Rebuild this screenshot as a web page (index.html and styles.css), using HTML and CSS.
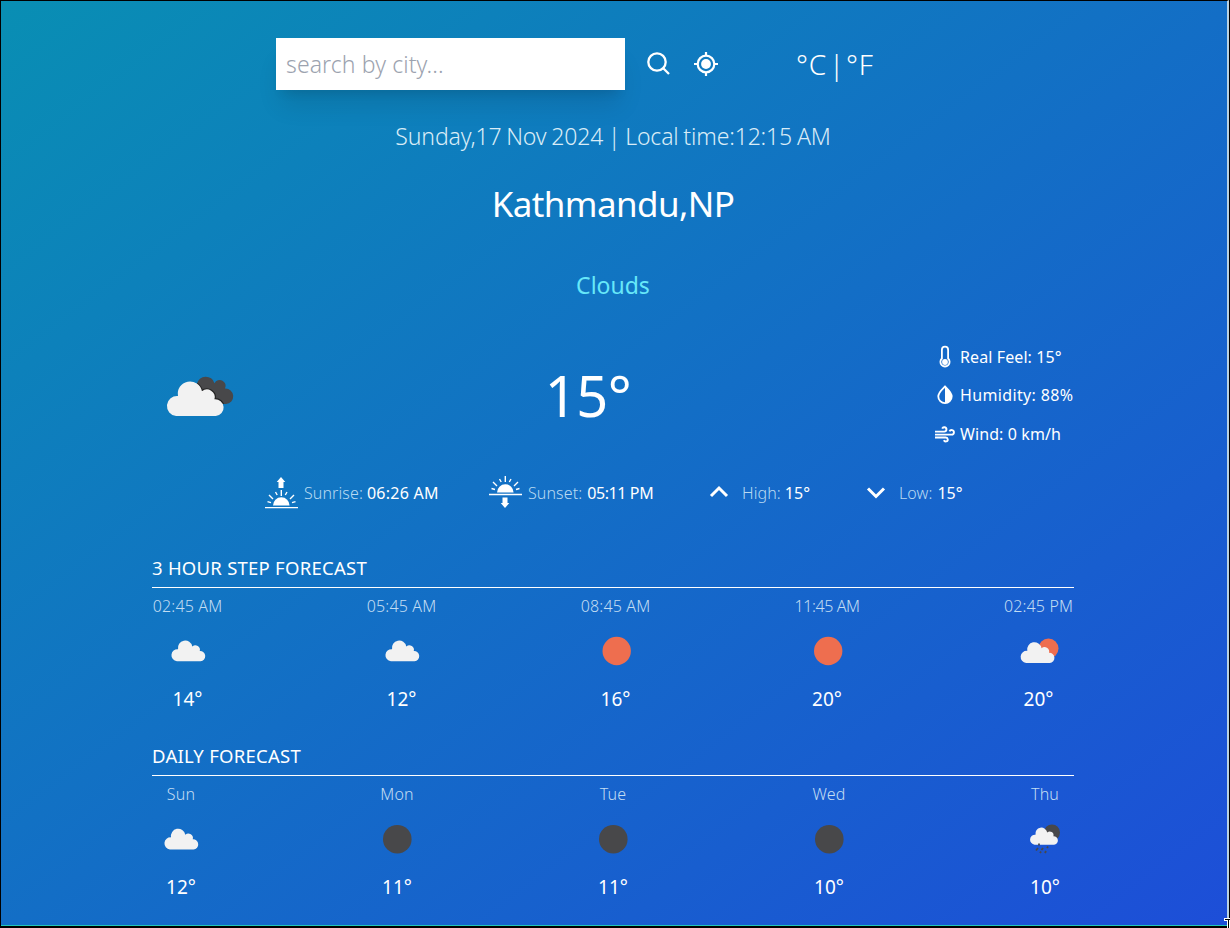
FILE: index.html
```html
<!DOCTYPE html>
<html lang="en">
<head>
<meta charset="utf-8">
<title>Weather</title>
<link rel="stylesheet" href="styles.css">
</head>
<body>
<svg class="defs" width="0" height="0">
  <defs>
    <path id="cloud" d="M5.8 21A5.9 5.9 0 0 1 6.900 9.200A6.9 6.9 0 0 1 20.9 6.5A4.5 4.5 0 0 1 28.200 11.1A4.95 4.95 0 0 1 29 21Z"/>
    <path id="back-cloud" d="M31 10a9 9 0 0 1 17.500-.8a5.800 5.800 0 0 1 10.500 5.400a7 7 0 0 1 1 15.400L40 30z"/>
    <clipPath id="back-clip"><use href="#back-cloud"/></clipPath>
  </defs>
</svg>
<main class="page">
  <div class="content">
    <div class="search-row">
      <input class="search" type="text" placeholder="search by city...">
      <svg class="search-icon" width="24" height="24" viewBox="0 0 24 24" fill="none" stroke="#fff" stroke-width="2.300"><circle cx="10" cy="10" r="8.700"/><path d="M16 16l6 6"/></svg>
      <svg class="locate-icon" width="24" height="24" viewBox="0 0 24 24" fill="none" stroke="#fff" stroke-width="2.200"><circle cx="12" cy="12" r="8.300"/><circle cx="12" cy="12" r="4.900" fill="#fff" stroke="none"/><path d="M12 0v4M12 20v4M0 12h4M20 12h4"/></svg>
      <span class="unit unit-c">°C</span><span class="bar">|</span><span class="unit unit-f">°F</span>
    </div>
    <p class="date">Sunday,17 Nov 2024 | Local time:12:15 AM</p>
    <h1 class="city">Kathmandu,NP</h1>
    <p class="condition">Clouds</p>
    <section class="current">
      <svg class="current-icon" width="70" height="44" viewBox="0 0 70 44">
        <use href="#back-cloud" fill="#48484a"/>
        <g clip-path="url(#back-clip)"><use href="#cloud" transform="translate(.2 6.300) scale(1.71 1.7)" fill="none" stroke="#222" stroke-width="1.300"/></g>
        <use href="#cloud" transform="translate(.2 6.300) scale(1.71 1.7)" fill="#f2f2f2"/>
      </svg>
      <p class="temperature">15°</p>
      <ul class="details">
        <li><svg width="21" height="24" viewBox="0 0 21 24" fill="none" stroke="#fff" stroke-width="1.800"><path d="M6.900 13.500V4.700a3.100 3.100 0 0 1 6.200 0v8.800a4.600 4.600 0 1 1-6.200 0z"/><circle cx="10" cy="17" r="2.900" fill="#fff" stroke="none"/></svg><span class="feel">Real Feel: 15°</span></li>
        <li><svg width="21" height="24" viewBox="0 0 21 24"><path d="M10 3.500C6.500 7 3.300 9.300 3.300 13.500a6.700 6.700 0 0 0 13.400 0C16.700 9.300 13.500 7 10 3.500z" fill="none" stroke="#fff" stroke-width="1.800"/><path d="M10 3.500C13.500 7 16.700 9.300 16.700 13.500a6.700 6.700 0 0 1-6.700 6.700z" fill="#fff"/></svg><span class="humidity">Humidity: 88%</span></li>
        <li><svg width="21" height="24" viewBox="0 0 21 24" fill="none" stroke="#fff" stroke-width="1.900"><path d="M0 9.600h9.300a2.200 2.200 0 1 0-2.100-3M0 12.600h16.700a2.300 2.300 0 1 0-2.200-3.200M0 15.500h10.800a2 2 0 1 1-1.900 2.700"/></svg><span class="wind">Wind: 0 km/h</span></li>
      </ul>
    </section>
    <section class="sun-row">
      <div class="fact sunrise">
        <svg width="33" height="34" viewBox="0 0 33 34" fill="none" stroke="#fff"><path d="M16 1l4.300 5H18.500v6h-5V6h-1.800z" fill="#fff" stroke="none"/><path d="M8 29.500a8.300 8.300 0 0 1 16.600 0z" fill="#fff" stroke="none"/><path d="M0 31.700h33" stroke-width="1.300"/><path d="M16.300 14v6M10.500 16l1.700 3M22 16l-1.700 3M4 19l4 4M29 19l-4 4M2.500 25.700l3.500 1M30.500 25.700l-3.500 1" stroke-width="1.400"/></svg>
        <span class="label">Sunrise:</span><span class="value">06:26 AM</span>
      </div>
      <div class="fact sunset">
        <svg width="33" height="34" viewBox="0 0 33 34" fill="none" stroke="#fff"><path d="M16 32l4.300-5H18.500v-5.500h-5V27h-1.800z" fill="#fff" stroke="none"/><path d="M8 16.500a8.300 8.300 0 0 1 16.600 0z" fill="#fff" stroke="none"/><path d="M0 18.500h33" stroke-width="1.300"/><path d="M16.300 0v6M10.500 3l1.700 3M22 3l-1.700 3M4 6l4 4M29 6l-4 4M2.500 12.500l3.500 1M30.500 12.500l-3.500 1" stroke-width="1.400"/></svg>
        <span class="label">Sunset:</span><span class="value">05:11 PM</span>
      </div>
      <div class="fact high">
        <svg width="18" height="14" viewBox="0 0 18 14" fill="none" stroke="#fff" stroke-width="3"><path d="M1 10l8-8 8 8"/></svg>
        <span class="label">High:</span><span class="value">15°</span>
      </div>
      <div class="fact low">
        <svg width="18" height="14" viewBox="0 0 18 14" fill="none" stroke="#fff" stroke-width="3"><path d="M1 2.500l8 8 8-8"/></svg>
        <span class="label">Low:</span><span class="value">15°</span>
      </div>
    </section>
    <section class="forecast hourly">
      <h2>3 HOUR STEP FORECAST</h2>
      <div class="cells">
        <div class="cell"><p class="when">02:45 AM</p><svg width="50" height="50" viewBox="0 0 50 50"><use href="#cloud" transform="translate(8 13.800) scale(1.020)" fill="#f2f2f2"/></svg><p class="temp">14°</p></div>
        <div class="cell"><p class="when">05:45 AM</p><svg width="50" height="50" viewBox="0 0 50 50"><use href="#cloud" transform="translate(8 13.800) scale(1.020)" fill="#f2f2f2"/></svg><p class="temp">12°</p></div>
        <div class="cell"><p class="when">08:45 AM</p><svg width="50" height="50" viewBox="0 0 50 50"><circle cx="25.700" cy="25" r="14.200" fill="#ee6e4f"/></svg><p class="temp">16°</p></div>
        <div class="cell narrow"><p class="when">11:45 AM</p><svg width="50" height="50" viewBox="0 0 50 50"><circle cx="26.200" cy="25" r="14.200" fill="#ee6e4f"/></svg><p class="temp">20°</p></div>
        <div class="cell"><p class="when">02:45 PM</p><svg width="50" height="50" viewBox="0 0 50 50"><circle cx="34.500" cy="22.500" r="10" fill="#ee6e4f"/><use href="#cloud" transform="translate(6.200 15.500) scale(1.020)" fill="#f2f2f2"/></svg><p class="temp">20°</p></div>
      </div>
    </section>
    <section class="forecast daily">
      <h2>DAILY FORECAST</h2>
      <div class="cells">
        <div class="cell"><p class="when">Sun</p><svg width="50" height="50" viewBox="0 0 50 50"><use href="#cloud" transform="translate(8 14) scale(1.020)" fill="#f2f2f2"/></svg><p class="temp">12°</p></div>
        <div class="cell"><p class="when">Mon</p><svg width="50" height="50" viewBox="0 0 50 50"><circle cx="25.300" cy="25.200" r="14.300" fill="#48484a"/></svg><p class="temp">11°</p></div>
        <div class="cell"><p class="when">Tue</p><svg width="50" height="50" viewBox="0 0 50 50"><circle cx="25.300" cy="25.200" r="14.300" fill="#48484a"/></svg><p class="temp">11°</p></div>
        <div class="cell"><p class="when">Wed</p><svg width="50" height="50" viewBox="0 0 50 50"><circle cx="25.300" cy="25.200" r="14.300" fill="#48484a"/></svg><p class="temp">10°</p></div>
        <div class="cell"><p class="when">Thu</p><svg width="50" height="50" viewBox="0 0 50 50"><circle cx="32" cy="18.500" r="8" fill="#48484a"/><use href="#cloud" transform="translate(9.700 13) scale(.84)" fill="#f2f2f2"/><path d="M19 29.500v2M28 32.500l-1 1.500M23 34l-1.500 2M18 34l-2 2.500M21 37.500l-1 1.500M26 37l-1 2" stroke="#48484a" stroke-width="1.800"/></svg><p class="temp">10°</p></div>
      </div>
    </section>
  </div>
</main>
<svg class="cursor" width="6" height="10" viewBox="0 0 6 10"><path d="M0 0h6v10H3V3H0z" fill="#fff"/><path d="M1 1.500h5M4.500 2v8" stroke="#000"/></svg>
</body>
</html>
```
FILE: styles.css
```css
* { box-sizing: border-box; }
body { margin: 0; background: #000; font-family: "Noto Sans", "Open Sans", sans-serif; color: #fff; }
.defs { display: block; }
p, h1, h2, ul { margin: 0; padding: 0; font-weight: 400; }
ul { list-style: none; }
svg { display: block; flex: none; overflow: visible; }
span, p, h1, h2 { white-space: nowrap; }
.page { width: 1228px; height: 926px; margin-left: 1px; border-top: 1px solid #000; border-right: 2px solid #b9d2e2; border-bottom: 1px solid #20c6b8; background: linear-gradient(to bottom right, #0891b2 -4%, #1d4ed8); }
.content { width: 922px; margin-left: 151px; padding-top: 37px; }
.search-row { display: flex; align-items: center; height: 52px; padding-left: 124px; }
.search { width: 349px; height: 52px; border: 0; padding: 0 10px; font: 300 23px "Noto Sans", sans-serif; letter-spacing: .1px; background: #fff; box-shadow: 0 20px 25px -5px rgba(0,0,0,.1), 0 8px 10px -6px rgba(0,0,0,.1); }
.search::placeholder { color: #9ca3af; opacity: 1; }
.search-icon { margin-left: 22px; }
.locate-icon { margin-left: 23px; }
.unit { font-size: 28px; font-weight: 350; }
.unit-c { margin-left: 78px; width: 33px; letter-spacing: .8px; }
.unit-f { letter-spacing: .8px; }
.bar { width: 17px; font-size: 28px; font-weight: 350; }
.date { margin-top: 26px; height: 40px; line-height: 40px; text-align: center; font-size: 23px; font-weight: 300; letter-spacing: -.15px; word-spacing: -1px; color: #d9ecf7; }
.city { margin-top: 23px; line-height: 50px; text-align: center; font-size: 35px; font-weight: 380; letter-spacing: -.6px; }
.condition { margin-top: 36px; line-height: 40px; text-align: center; font-size: 23px; font-weight: 370; color: #67e8f9; }
.current { display: flex; align-items: center; justify-content: space-between; height: 116px; margin-top: 32px; padding-left: 14px; }
.current-icon { margin-top: 1px; }
.temperature { padding-left: 5px; font-size: 56px; font-weight: 380; line-height: 60px; letter-spacing: -.5px; }
.details { width: 139px; }
.details li { display: flex; align-items: center; height: 38.500px; font-size: 16px; }
.details svg { margin-right: 4px; }
.humidity { letter-spacing: .35px; }
.feel, .wind { letter-spacing: .1px; }
.sun-row { display: grid; grid-template-columns: 224px 221px 157px 120px; height: 40px; margin-top: 20px; padding-left: 113px; }
.fact { display: flex; align-items: center; font-size: 16px; }
.label { margin-left: 6px; font-weight: 300; letter-spacing: .1px; color: #b9daf2; }
.value { margin-left: 4px; }
.sunrise .value { letter-spacing: .25px; }
.sunset .value { letter-spacing: -.4px; margin-left: 5px; }
.high .label, .low .label { margin-left: 14px; }
.low .value { margin-left: 5px; }
.forecast { height: 188px; }
.hourly { margin-top: 40px; }
.forecast h2 { height: 35px; line-height: 30px; border-bottom: 1px solid #fff; font-size: 18.500px; letter-spacing: .25px; }
.cells { display: flex; justify-content: space-between; padding-top: 6px; }
.cell { width: 71px; display: flex; flex-direction: column; align-items: center; }
.narrow { width: 66px; }
.daily .cell { width: 58px; }
.when { line-height: 24px; font-size: 16px; font-weight: 300; letter-spacing: .15px; color: #c2ddf3; }
.narrow .when { letter-spacing: -.4px; }
.cell svg { margin: 8px 0; }
.temp { line-height: 30px; font-size: 19px; }
.cursor { position: absolute; left: 1224px; top: 918px; overflow: hidden; }
```
